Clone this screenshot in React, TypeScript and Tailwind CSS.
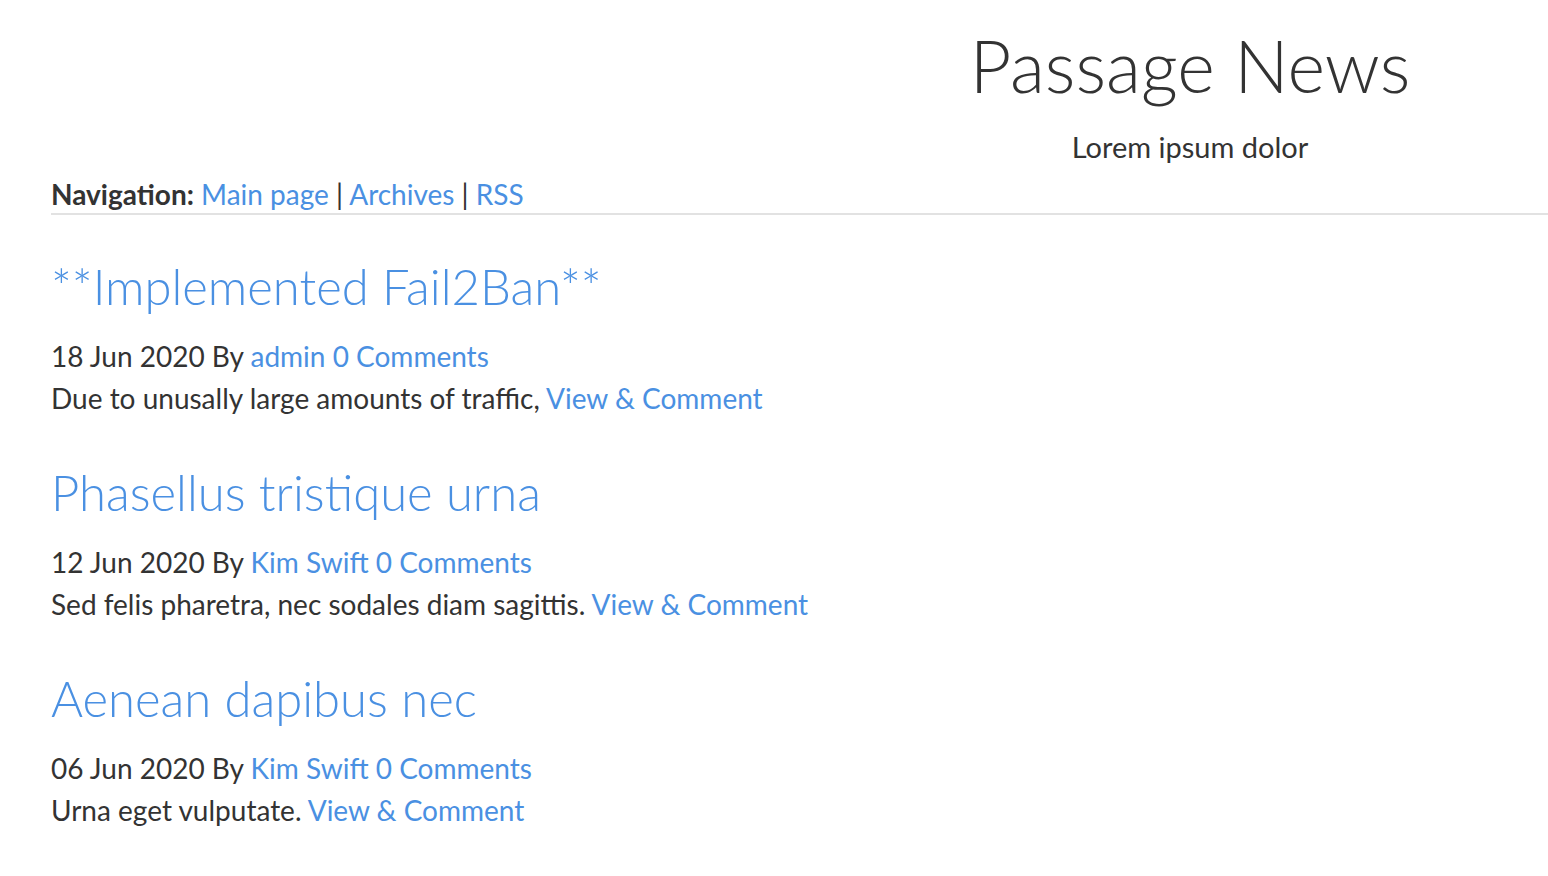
import React from "react";

const LINK = "text-[#4a90e2] no-underline";

type Post = { title: string; date: string; author: string; body: string };

const posts: Post[] = [
  { title: "**Implemented Fail2Ban**", date: "18 Jun 2020", author: "admin", body: "Due to unusally large amounts of traffic," },
  { title: "Phasellus tristique urna", date: "12 Jun 2020", author: "Kim Swift", body: "Sed felis pharetra, nec sodales diam sagittis." },
  { title: "Aenean dapibus nec", date: "06 Jun 2020", author: "Kim Swift", body: "Urna eget vulputate." },
];

export default function App() {
  return (
    <div className="min-h-screen bg-white text-[#333] font-['Lato','Noto_Sans',sans-serif]">
      <div className="pl-[51px]">
        <header className="flex justify-end pt-[25px]">
          <div className="w-[716px] text-center">
            <h1 className="text-[72px] font-light leading-[80px]">Passage News</h1>
            <p className="mt-[24px] text-[29px] leading-[36px]">Lorem ipsum dolor</p>
          </div>
        </header>
        <nav className="mt-[11px] pb-[1px] border-b-2 border-[#e2e2e2] text-[28px] leading-[36px]">
          <span className="font-bold">Navigation:</span>{" "}
          <a className={LINK} href="#">Main page</a> | <a className={LINK} href="#">Archives</a> |{" "}
          <a className={LINK} href="#">RSS</a>
        </nav>
        <main>
          {posts.map((p, i) => (
            <article key={p.title} className={i === 0 ? "mt-[43px]" : "mt-[45px]"}>
              <h2 className="text-[49px] font-light leading-[56px]">
                <a className={LINK} href="#">{p.title}</a>
              </h2>
              <p className="mt-[21px] text-[28px] leading-[42px]">
                {p.date} By <a className={LINK} href="#">{p.author}</a>{" "}
                <a className={LINK} href="#">0 Comments</a>
              </p>
              <p className="text-[28px] leading-[42px]">
                {p.body} <a className={LINK} href="#">View &amp; Comment</a>
              </p>
            </article>
          ))}
        </main>
      </div>
    </div>
  );
}
